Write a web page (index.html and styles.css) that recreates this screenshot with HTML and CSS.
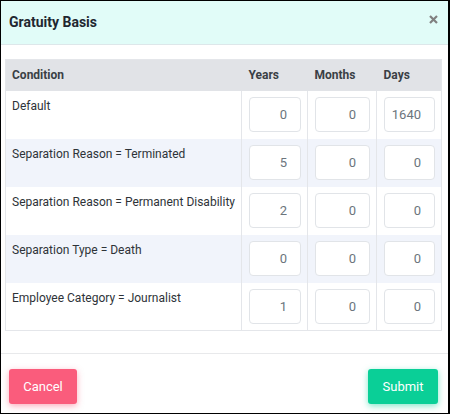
FILE: index.html
```html
<!DOCTYPE html>
<html>
<head>
<meta charset="utf-8">
<link rel="stylesheet" href="styles.css">
</head>
<body>
<div class="modal">
  <div class="modal-header">
    <h5 class="modal-title">Gratuity Basis</h5>
    <button class="close" aria-label="Close">
      <svg width="9" height="9" viewBox="0 0 9 9"><path d="M1 1L8 8M8 1L1 8" stroke="#808080" stroke-width="2.2" stroke-linecap="butt"/></svg>
    </button>
  </div>
  <div class="modal-body">
    <table class="basis">
      <colgroup>
        <col class="c-cond"><col class="c-years"><col class="c-months"><col class="c-days">
      </colgroup>
      <thead>
        <tr><th>Condition</th><th>Years</th><th>Months</th><th>Days</th></tr>
      </thead>
      <tbody>
        <tr>
          <td class="cond">Default</td>
          <td><input class="num" value="0"></td>
          <td><input class="num" value="0"></td>
          <td><input class="num" value="1640"></td>
        </tr>
        <tr class="alt">
          <td class="cond">Separation Reason = Terminated</td>
          <td><input class="num" value="5"></td>
          <td><input class="num" value="0"></td>
          <td><input class="num" value="0"></td>
        </tr>
        <tr>
          <td class="cond">Separation Reason = Permanent Disability</td>
          <td><input class="num" value="2"></td>
          <td><input class="num" value="0"></td>
          <td><input class="num" value="0"></td>
        </tr>
        <tr class="alt">
          <td class="cond">Separation Type = Death</td>
          <td><input class="num" value="0"></td>
          <td><input class="num" value="0"></td>
          <td><input class="num" value="0"></td>
        </tr>
        <tr>
          <td class="cond">Employee Category = Journalist</td>
          <td><input class="num" value="1"></td>
          <td><input class="num" value="0"></td>
          <td><input class="num" value="0"></td>
        </tr>
      </tbody>
    </table>
  </div>
  <div class="modal-footer">
    <button class="btn btn-danger">Cancel</button>
    <button class="btn btn-success">Submit</button>
  </div>
</div>
</body>
</html>
```
FILE: styles.css
```css
* { box-sizing: border-box; }
html, body { margin: 0; padding: 0; }
body {
  font-family: Roboto, "Liberation Sans", sans-serif;
  color: #313a46;
  background: #fff;
}
.modal {
  width: 450px;
  height: 414px;
  border: 1px solid #000;
  border-right-width: 2px;
  display: flex;
  flex-direction: column;
  background: #fff;
}
.modal-header {
  height: 44px;
  flex: none;
  display: flex;
  align-items: center;
  justify-content: space-between;
  padding: 0 10px 0 8px;
  background: #e1fcf8;
  border-bottom: 1px solid #dde7ea;
}
.modal-title {
  margin: 0;
  font-size: 14px;
  font-weight: 700;
  color: #212730;
  position: relative;
  top: -1px;
}
.close {
  border: 0;
  background: none;
  padding: 0;
  width: 10px;
  height: 10px;
  display: flex;
  align-items: center;
  justify-content: center;
  position: relative;
  top: -3px;
}
.modal-body {
  padding: 14px 7px 22px 4px;
  flex: 1;
}
.basis {
  width: 436px;
  border-collapse: collapse;
  table-layout: fixed;
  border: 1px solid #e4e6ea;
  font-size: 12px;
}
.c-cond { width: 236px; }
.c-years { width: 66px; }
.c-months { width: 69px; }
.c-days { width: 65px; }
.basis thead th {
  background: #e1e3e7;
  height: 31px;
  text-align: left;
  font-weight: 700;
  color: #3a3f45;
  padding: 0 7px;
  font-size: 12px;
}
.basis thead th:first-child { padding-left: 6px; }
.basis tbody td {
  height: 48px;
  padding: 6px 6px 5px 7px;
  border-left: 1px solid #e4e6ea;
  vertical-align: top;
}
.basis tbody td.cond {
  border-left: 0;
  padding: 8px 6px;
  color: #2e3338;
  line-height: 15px;
}
.basis tbody tr.alt td { background: #f1f4fb; }
.num {
  display: block;
  width: 100%;
  height: 35px;
  border: 1px solid #e1e4e8;
  border-radius: 4px;
  background: #fff;
  padding: 0 13px 0 6px;
  text-align: right;
  font-family: Roboto, "Liberation Sans", sans-serif;
  font-size: 13px;
  color: #6c757d;
  outline: none;
}
.modal-footer {
  flex: none;
  height: 60px;
  border-top: 1px solid #e8e9eb;
  display: flex;
  align-items: flex-start;
  justify-content: space-between;
  padding: 15px 10px 0 8px;
}
.btn {
  height: 35px;
  border: 0;
  border-radius: 3px;
  color: #fff;
  font-family: Roboto, "Liberation Sans", sans-serif;
  font-size: 13px;
  padding: 0 12px;
}
.btn-danger {
  background: #fa5c7c;
  box-shadow: 0 2px 6px 0 rgba(250, 92, 124, 0.5);
  width: 68px;
}
.btn-success {
  background: #0acf97;
  box-shadow: 0 2px 6px 0 rgba(10, 207, 151, 0.5);
  width: 70px;
}
```
